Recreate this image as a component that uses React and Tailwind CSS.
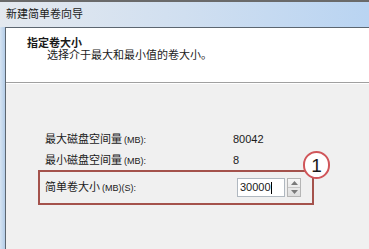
import React from 'react'

const font = { fontFamily: '"Liberation Sans", "Noto Sans CJK SC", sans-serif' }

// Read-only size rows above the highlighted input
const sizeRows = [
  { label: '最大磁盘空间量', value: '80042' },
  { label: '最小磁盘空间量', value: '8' },
]

const Spinner = () => (
  <div className="w-[14px] h-[19px] flex flex-col border border-[#b5b5b5] bg-gradient-to-b from-[#f7f7f7] to-[#dedede]">
    <div className="flex-1 flex items-center justify-center border-b border-[#c8c8c8]">
      <svg width="7" height="4" viewBox="0 0 7 4"><path d="M0 4L3.5 0L7 4Z" fill="#7a7a7a" /></svg>
    </div>
    <div className="flex-1 flex items-center justify-center">
      <svg width="7" height="4" viewBox="0 0 7 4"><path d="M0 0L3.5 4L7 0Z" fill="#7a7a7a" /></svg>
    </div>
  </div>
)

const App = () => {
  return (
    <div className="w-[369px] h-[249px] overflow-hidden flex flex-col bg-[#f0f0f0] text-[#1a1a1a]" style={font}>
      {/* window top edge */}
      <div className="h-[2px] bg-[#6a6a6a]" />

      {/* title bar */}
      <div className="h-[25px] flex items-center pl-[6px] bg-gradient-to-r from-[#e4e9ef] via-[#d0dff0] to-[#b9d4f2] text-[11px]">
        新建简单卷向导
      </div>

      <div className="flex-1 flex">
        {/* left window frame */}
        <div className="w-[5px] bg-gradient-to-r from-[#d6e4f2] to-[#b4cde8]" />
        <div className="flex-1 flex flex-col border-l border-t border-[#5c6670]">
          {/* header */}
          <div className="h-[54px] bg-white pl-[21px] pt-[9px] leading-[13px]">
            <div className="text-[11px] font-bold">指定卷大小</div>
            <div className="text-[11px] pl-[20px] mt-[-1px]">选择介于最大和最小值的卷大小。</div>
          </div>
          <div className="h-px bg-[#a0a0a0]" />
          <div className="h-px bg-white" />

          {/* body */}
          <div className="flex-1 pl-[32px] pt-[45px] text-[11px]">
            {sizeRows.map((row) => (
              <div key={row.label} className="h-[21px] flex items-center pl-[7px]">
                <span className="w-[188px]">
                  {row.label}
                  <span className="text-[9px] ml-[2px]">(MB):</span>
                </span>
                <span>{row.value}</span>
              </div>
            ))}

            {/* highlighted simple volume size */}
            <div className="relative mt-[-1px] w-[276px] h-[35px] border-2 border-[#a4524c] flex items-center pl-[5px]">
              <span className="w-[192px]">
                简单卷大小
                <span className="text-[9px] ml-[2px]">(MB)(S):</span>
              </span>
              <div className="w-[48px] h-[19px] bg-white border border-[#b0b8c0] flex items-center pl-[2px] text-[11px]">
                30000<span className="w-px h-[12px] bg-black" />
              </div>
              <div className="ml-[2px]">
                <Spinner />
              </div>

              {/* step marker */}
              <div className="absolute left-[263px] top-[-21px] w-[27px] h-[28px] rounded-full border-2 border-[#d0565a] bg-white flex items-center justify-center text-[19px] leading-none">
                1
              </div>
            </div>
          </div>
        </div>
      </div>
    </div>
  )
}

export default App
